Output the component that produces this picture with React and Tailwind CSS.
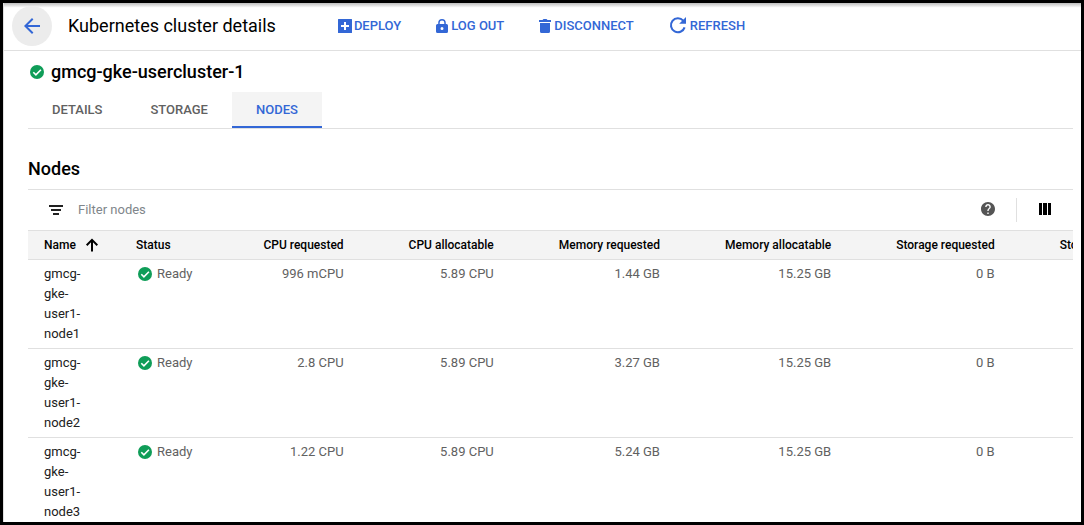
import { MdArrowBack } from "react-icons/md";

const nodes = [
  { name: "gmcg-gke-user1-node1", cpu: "996 mCPU", memory: "1.44 GB" },
  { name: "gmcg-gke-user1-node2", cpu: "2.8 CPU", memory: "3.27 GB" },
  { name: "gmcg-gke-user1-node3", cpu: "1.22 CPU", memory: "5.24 GB" },
];

const numericColumns = [
  "CPU requested",
  "CPU allocatable",
  "Memory requested",
  "Memory allocatable",
  "Storage requested",
  "Storage allocatable",
];

function CheckIcon() {
  return (
    <svg className="size-3.5 shrink-0" viewBox="0 0 14 14" aria-hidden="true">
      <circle cx="7" cy="7" r="7" fill="#0f9d58" />
      <path d="M3.3 7.2 5.9 9.8 10.9 4.7" fill="none" stroke="#fff" strokeWidth="1.6" />
    </svg>
  );
}

function AddBoxIcon() {
  return (
    <svg className="size-[18px]" viewBox="0 0 18 18" fill="currentColor" aria-hidden="true">
      <path
        fillRule="evenodd"
        d="M2.500 2h13a.5.5 0 0 1 .5.5v13a.5.5 0 0 1-.5.5h-13a.5.5 0 0 1-.5-.5v-13a.5.5 0 0 1 .5-.5ZM8 5v3H5v2h3v3h2v-3h3V8h-3V5Z"
      />
    </svg>
  );
}

function LockIcon() {
  return (
    <svg className="size-[18px]" viewBox="-3 -2 18 18" fill="currentColor" aria-hidden="true">
      <path
        fillRule="evenodd"
        d="M2.2 5V3.8a3.8 3.8 0 0 1 7.6 0V5h.7A1.5 1.5 0 0 1 12 6.5v6a1.5 1.5 0 0 1-1.5 1.5h-9A1.5 1.5 0 0 1 0 12.5v-6A1.5 1.5 0 0 1 1.5 5ZM3.7 5h4.6V3.8a2.3 2.3 0 0 0-4.6 0ZM6 8a1.5 1.5 0 1 0 0 3 1.5 1.5 0 0 0 0-3Z"
      />
    </svg>
  );
}

function TrashIcon() {
  return (
    <svg className="size-[18px]" viewBox="-3 -2 18 18" fill="currentColor" aria-hidden="true">
      <path d="M0 1h3.5l1-1h3l1 1H12v2H0ZM1 4h10v8.5A1.5 1.5 0 0 1 9.5 14h-7A1.5 1.5 0 0 1 1 12.5Z" />
    </svg>
  );
}

function RefreshIcon() {
  return (
    <svg className="size-6" viewBox="-4 -3 24 24" aria-hidden="true">
      <path
        d="M13.2 3.600A7 7 0 1 0 14.600 10.400"
        fill="none"
        stroke="currentColor"
        strokeWidth="2.100"
      />
      <path d="M16 0v6.800H9.200Z" fill="currentColor" />
    </svg>
  );
}

function FilterIcon() {
  return (
    <svg className="h-2.5 w-3.5 shrink-0" viewBox="0 0 14 10" fill="#212121" aria-hidden="true">
      <path d="M0 0h14v2H0ZM2 4h10v2H2ZM4 8h6v2H4Z" />
    </svg>
  );
}

function SortUpIcon() {
  return (
    <svg className="size-3.5" viewBox="0 0 14 14" fill="none" stroke="currentColor" aria-hidden="true">
      <path d="M7 13.500V2M1.700 7.200 7 1.900l5.300 5.300" strokeWidth="2" />
    </svg>
  );
}

function HelpIcon() {
  return (
    <svg className="size-3.5" viewBox="2 2 20 20" fill="currentColor" aria-hidden="true">
      <path d="M12 2C6.48 2 2 6.48 2 12s4.48 10 10 10 10-4.48 10-10S17.52 2 12 2zm1 17h-2v-2h2v2zm2.07-7.75l-.9.92C13.45 12.9 13 13.5 13 15h-2v-.5c0-1.1.45-2.1 1.17-2.83l1.24-1.26c.37-.36.59-.86.59-1.41 0-1.1-.9-2-2-2s-2 .9-2 2H8c0-2.21 1.79-4 4-4s4 1.79 4 4c0 .88-.36 1.68-.93 2.25z" />
    </svg>
  );
}

function ColumnsIcon() {
  return (
    <svg className="size-3" viewBox="0 0 12 12" fill="currentColor" aria-hidden="true">
      <path d="M0 0h3v12H0ZM4 0h4v12H4ZM9 0h3v12H9Z" />
    </svg>
  );
}

function Tab({ label, active }) {
  return (
    <button
      role="tab"
      aria-selected={Boolean(active)}
      className={
        active
          ? "h-9 border-b-2 border-[#3367d6] bg-[#f4f4f4] px-6 pt-0.5 text-[#3367d6]"
          : "h-9 border-b-2 border-transparent px-6 pt-0.5 text-[#616161]"
      }
    >
      {label}
    </button>
  );
}

export default function App() {
  return (
    <div className="h-screen overflow-hidden border-3 border-black bg-white font-['Roboto',sans-serif] text-[13px] leading-5 text-black">
      <div className="h-full overflow-hidden border-l border-[#e0e0e0]">
        <header className="flex h-12 items-center border-b border-[#e0e0e0] bg-linear-to-b from-[#bdbdbd] to-white to-10% pb-px pl-2">
          <button
            aria-label="Back"
            className="flex size-10 items-center justify-center rounded-full bg-[#ececec] text-[#3367d6]"
          >
            <MdArrowBack className="size-6" />
          </button>
          <h1 className="ml-4 text-lg">Kubernetes cluster details</h1>
          <div className="ml-15 flex items-center gap-8 font-medium text-[#3367d6]">
            <button className="flex items-center">
              <AddBoxIcon />
              DEPLOY
            </button>
            <button className="flex items-center">
              <LockIcon />
              LOG OUT
            </button>
            <button className="flex items-center">
              <TrashIcon />
              DISCONNECT
            </button>
            <button className="flex items-center">
              <RefreshIcon />
              REFRESH
            </button>
          </div>
        </header>

        <main className="mr-2 ml-6">
          <div className="flex h-[41px] items-center gap-[7px] pl-0.5">
            <CheckIcon />
            <h2 className="text-lg font-medium">gmcg-gke-usercluster-1</h2>
          </div>
          <div role="tablist" className="flex border-b border-[#e0e0e0] font-medium">
            <Tab label="DETAILS" />
            <Tab label="STORAGE" />
            <Tab label="NODES" active />
          </div>

          <h3 className="pt-[25px] pb-[5px] text-lg leading-[30px] font-medium">Nodes</h3>

          <div className="flex h-[41px] items-center border-t border-[#e0e0e0] pr-[22px] pl-[21px]">
            <FilterIcon />
            <input
              type="text"
              aria-label="Filter nodes"
              placeholder="Filter nodes"
              className="ml-[15px] min-w-0 flex-1 outline-none placeholder:text-[#80868b]"
            />
            <button aria-label="Help" className="pb-0.5 text-[#555]">
              <HelpIcon />
            </button>
            <div className="mr-[22px] ml-[21px] h-6 w-px bg-[#e0e0e0]" />
            <button aria-label="Column display options" className="pb-0.5">
              <ColumnsIcon />
            </button>
          </div>

          <div className="overflow-x-auto [scrollbar-width:none]">
            <table className="border-separate border-spacing-0 whitespace-nowrap">
              <thead className="bg-[#f4f4f4] text-xs">
                <tr>
                  <th className="h-[30px] border-y border-[#e0e0e0] px-4 text-left font-medium">
                    <span className="flex w-15 items-center gap-[9px]">
                      Name
                      <SortUpIcon />
                    </span>
                  </th>
                  <th className="border-y border-[#e0e0e0] px-4 text-left font-medium">Status</th>
                  {numericColumns.map((column) => (
                    <th
                      key={column}
                      className="border-y border-[#e0e0e0] pr-4 pl-[49px] text-right font-medium"
                    >
                      {column}
                    </th>
                  ))}
                </tr>
              </thead>
              <tbody>
                {nodes.map((node) => (
                  <tr key={node.name} className="align-top text-[#616161]">
                    <td className="border-b border-[#e0e0e0] px-4 py-1 text-[#212121]">
                      <a href="#node" className="block w-12 whitespace-normal">
                        {node.name}
                      </a>
                    </td>
                    <td className="border-b border-[#e0e0e0] py-1 pr-[22px] pl-[18px]">
                      <span className="flex items-center gap-[5px]">
                        <CheckIcon />
                        Ready
                      </span>
                    </td>
                    {[node.cpu, "5.89 CPU", node.memory, "15.25 GB", "0 B", "0 B"].map(
                      (value, index) => (
                        <td
                          key={numericColumns[index]}
                          className="border-b border-[#e0e0e0] px-4 py-1 text-right"
                        >
                          {value}
                        </td>
                      )
                    )}
                  </tr>
                ))}
              </tbody>
            </table>
          </div>
        </main>
      </div>
    </div>
  );
}
